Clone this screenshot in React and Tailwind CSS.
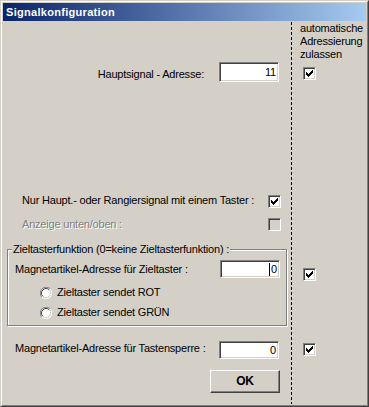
import React from 'react'

const sunken = 'border border-t-[#808080] border-l-[#808080] border-b-white border-r-white shadow-[inset_1px_1px_0_#404040,inset_-1px_-1px_0_#d4d0c8]'

function CheckMark() {
	return (
		<svg width="7" height="7" viewBox="0 0 7 7" shapeRendering="crispEdges">
			<path fill="#000" d="M6 0h1v1h-1z M5 1h2v1h-2z M0 2h1v1h-1z M4 2h3v1h-3z M0 3h2v1h-2z M3 3h3v1h-3z M0 4h5v1h-5z M1 5h3v1h-3z M2 6h1v1h-1z" />
		</svg>
	)
}

function CheckBox({checked = true, disabled = false, className = ''}) {
	return (
		<div className={`w-[13px] h-[13px] shrink-0 flex items-center justify-center ${sunken} ${disabled ? 'bg-[#d4d0c8]' : 'bg-white'} ${className}`}>
			{checked && <CheckMark />}
		</div>
	)
}

function Radio() {
	return (
		<svg width="12" height="12" viewBox="0 0 12 12" className="shrink-0">
			<circle cx="6" cy="6" r="5" fill="#fff" />
			<path d="M1.76 10.24 A6 6 0 0 1 10.24 1.76" stroke="#808080" fill="none" strokeWidth="1" />
			<path d="M10.24 1.76 A6 6 0 0 1 1.76 10.24" stroke="#fff" fill="none" strokeWidth="1" />
			<path d="M2.82 9.18 A4.5 4.5 0 0 1 9.18 2.82" stroke="#404040" fill="none" strokeWidth="1" />
			<path d="M9.18 2.82 A4.5 4.5 0 0 1 2.82 9.18" stroke="#d4d0c8" fill="none" strokeWidth="1" />
		</svg>
	)
}

function TextBox({value, caret = false, className = ''}) {
	return (
		<div className={`w-[60px] bg-white flex items-center justify-end pr-[2px] ${sunken} ${className}`}>
			{caret && <span className="w-px h-[13px] bg-black mr-px" />}
			<span>{value}</span>
		</div>
	)
}

export default function App() {
	return (
		<div className="w-[369px] h-[407px] border border-t-[#d4d0c8] border-l-[#d4d0c8] border-b-[#404040] border-r-[#404040] font-['Liberation_Sans',Arial,sans-serif] text-[11px] leading-[13px] tracking-[-0.2px] text-black">
			<div className="h-full border border-t-white border-l-white border-b-[#808080] border-r-[#808080] bg-[#d4d0c8] p-px flex flex-col">
				<div className="h-[18px] shrink-0 flex items-center pl-[3px] bg-[linear-gradient(to_right,#0a246a,#a6caf0)] text-white font-bold tracking-[0.3px]">
					Signalkonfiguration
				</div>

				<div className="flex flex-1 mt-px">
					{/* linke Seite */}
					<div className="w-[288px] flex flex-col">
						<div className="mt-[40px] flex items-start">
							<span className="w-[201px] text-right mt-[6px]">Hauptsignal - Adresse:</span>
							<TextBox value="11" className="ml-[15px] h-[20px]" />
						</div>

						<div className="mt-[112px] flex items-start">
							<span className="w-[265px] pl-[19px]">Nur Haupt.- oder Rangiersignal mit einem Taster :</span>
							<CheckBox className="mt-px" />
						</div>

						<div className="mt-[10px] flex items-start">
							<span className="w-[265px] pl-[19px] text-[#808080] [text-shadow:1px_1px_0_#fff]">Anzeige unten/oben :</span>
							<CheckBox checked={false} disabled />
						</div>

						<fieldset className="mt-[12px] ml-[4px] w-[280px] border border-[#808080] shadow-[1px_1px_0_#fff,inset_1px_1px_0_#fff] px-0 pb-[6px]">
							<legend className="ml-[4px] px-px bg-[#d4d0c8]">Zieltasterfunktion (0=keine Zieltasterfunktion) :</legend>
							<div className="mt-[4px] flex items-start">
								<span className="w-[212px] pl-[7px] mt-[3px]">Magnetartikel-Adresse für Zieltaster :</span>
								<TextBox value="0" caret className="h-[18px]" />
							</div>
							<div className="mt-[8px] flex items-center pl-[32px]">
								<Radio />
								<span className="ml-[5px]">Zieltaster sendet ROT</span>
							</div>
							<div className="mt-[7px] flex items-center pl-[32px]">
								<Radio />
								<span className="ml-[5px]">Zieltaster sendet GRÜN</span>
							</div>
						</fieldset>

						<div className="mt-[15px] flex items-start">
							<span className="w-[216px] pl-[12px] mt-px">Magnetartikel-Adresse für Tastensperre :</span>
							<TextBox value="0" className="h-[18px]" />
						</div>

						<button className="mt-[11px] ml-[207px] w-[70px] h-[23px] border border-t-white border-l-white border-b-[#404040] border-r-[#404040] shadow-[inset_-1px_-1px_0_#808080] bg-[#d4d0c8] font-bold text-[12px] flex items-center justify-center">
							OK
						</button>
					</div>

					<div className="w-px bg-[repeating-linear-gradient(to_bottom,#000_0_3px,transparent_3px_5px)]" />

					{/* rechte Seite */}
					<div className="flex-1 flex flex-col">
						<div className="pl-[8px]">automatische<br />Adressierung<br />zulassen</div>
						<CheckBox className="mt-[6px] ml-[11px]" />
						<CheckBox className="mt-[188px] ml-[11px]" />
						<CheckBox className="mt-[62px] ml-[11px]" />
					</div>
				</div>
			</div>
		</div>
	)
}
